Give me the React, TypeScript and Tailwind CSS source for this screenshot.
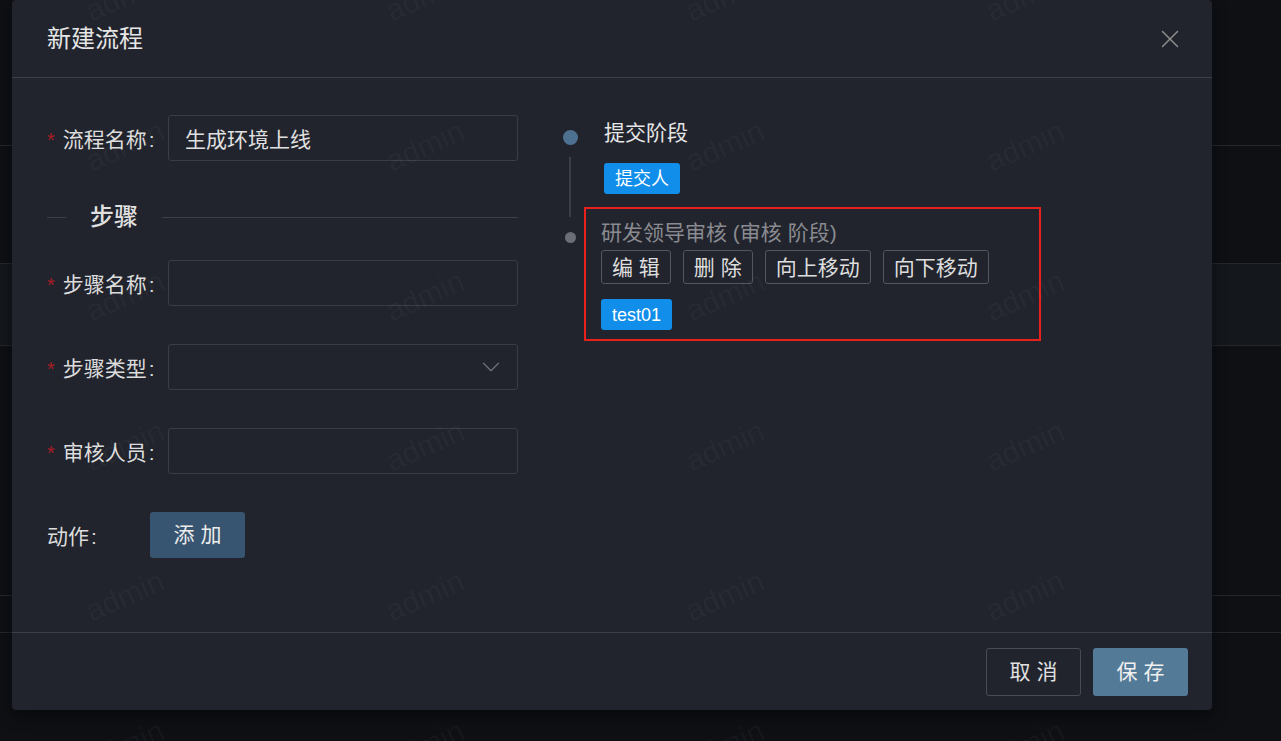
import { X, ChevronDown } from "lucide-react"

const FONT = "font-[family-name:'Liberation_Sans','Noto_Sans_CJK_SC',sans-serif]"

function Label({ text, required = true, width = "w-[121px]" }: { text: string; required?: boolean; width?: string }) {
  return (
    <div className={`flex shrink-0 items-center pt-[3px] text-[21px] leading-[30px] text-[#dcdcdc] ${width}`}>
      {required && <span className="mr-[8px] text-[20px] text-[#a61d24]">*</span>}
      <span>{text}</span>
      <span className="ml-[2px]">:</span>
    </div>
  )
}

function Field({ label, value, select }: { label: string; value?: string; select?: boolean }) {
  return (
    <div className="flex h-[46px] items-center">
      <Label text={label} />
      <div className="flex h-full flex-1 items-center justify-between rounded-[3px] border border-[#3a3d46] pr-[11px] pl-[16px] text-[21px] text-[#e0e0e0]">
        <span className="pt-[3px]">{value}</span>
        {select && <ChevronDown className="size-[30px] text-[#6b6e75]" strokeWidth={1.1} />}
      </div>
    </div>
  )
}

function SmallButton({ children }: { children: React.ReactNode }) {
  return (
    <button className="flex h-[34px] items-center rounded-[3px] border border-[#53565e] px-[10px] text-[21px] leading-none text-[#dedede]">
      {children}
    </button>
  )
}

function Tag({ children }: { children: React.ReactNode }) {
  return (
    <span className="inline-flex h-[31px] items-center rounded-[3px] bg-[#118ee9] px-[11px] text-[18px] leading-none text-white">
      {children}
    </span>
  )
}

function Watermark() {
  const cells = Array.from({ length: 5 * 6 })
  return (
    <div className="pointer-events-none absolute top-[-80px] left-[-25px] grid auto-rows-[150px] grid-cols-[repeat(5,300px)]">
      {cells.map((_, i) => (
        <div key={i} className="flex items-center justify-center">
          <span className="-rotate-[24deg] text-[30px] text-[rgba(255,255,255,0.04)]">admin</span>
        </div>
      ))}
    </div>
  )
}

export default function App() {
  return (
    <div className={`relative h-[741px] w-[1281px] overflow-hidden bg-[#0e1014] ${FONT}`}>
      {/* page behind the mask */}
      <div className="flex h-full flex-col">
        <div className="h-[146px] border-b border-[#24272d]" />
        <div className="h-[118px] border-b border-[#24272d]" />
        <div className="h-[82px] border-b border-[#24272d] bg-[#14171c]" />
        <div className="h-[250px] border-b border-[#24272d]" />
        <div className="h-[37px] border-b border-[#24272d]" />
        <div className="flex-1" />
      </div>

      {/* modal */}
      <div className="absolute top-0 left-[12px] flex w-[1200px] flex-col rounded-[4px] bg-[#21242d] shadow-[0_6px_16px_rgba(0,0,0,0.45)]">
        <div className="flex h-[78px] items-center justify-between border-b border-[#3c3f48] pr-[27px] pl-[35px]">
          <span className="text-[24px] text-[#e6e6e6]">新建流程</span>
          <X className="size-[30px] text-[#8c8c8c]" strokeWidth={1.2} />
        </div>

        <div className="flex h-[554px] pl-[35px]">
          {/* left form */}
          <div className="flex w-[471px] flex-col pt-[37px]">
            <Field label="流程名称" value="生成环境上线" />

            <div className="mt-[39px] mb-[26px] flex h-[34px] items-center">
              <div className="h-px w-[19px] bg-[#3c3f48]" />
              <span className="px-[24px] text-[24px] leading-[34px] font-medium text-[#e0e0e0]">步骤</span>
              <div className="h-px flex-1 bg-[#3c3f48]" />
            </div>

            <div className="flex flex-col gap-[38px]">
              <Field label="步骤名称" />
              <Field label="步骤类型" select />
              <Field label="审核人员" />
              <div className="flex h-[46px] items-center">
                <Label text="动作" required={false} width="w-[103px]" />
                <button className="flex h-[46px] w-[95px] items-center justify-center rounded-[3px] bg-[#375470] text-[21px] text-[#ececec]">
                  添 加
                </button>
              </div>
            </div>
          </div>

          {/* timeline */}
          <div className="ml-[42px] flex flex-col pt-[40px]">
            <div className="flex">
              <div className="flex w-[20px] flex-col items-center">
                <div className="mt-[12px] size-[15px] rounded-full bg-[#4e7192]" />
                <div className="mt-[12px] -mb-[10px] w-[2px] flex-1 bg-[#3b3e46]" />
              </div>
              <div className="ml-[24px] flex flex-col items-start pb-[13px]">
                <span className="text-[21px] leading-[30px] text-[#e6e6e6]">提交阶段</span>
                <div className="mt-[15px]">
                  <Tag>提交人</Tag>
                </div>
              </div>
            </div>

            <div className="flex">
              <div className="flex w-[20px] justify-center">
                <div className="mt-[25px] size-[11px] rounded-full bg-[#6b6e76]" />
              </div>
              <div className="ml-[4px] flex w-[457px] flex-col items-start border-2 border-[#e8211b] pt-[9px] pb-[9px] pl-[15px]">
                <span className="text-[21px] leading-[30px] text-[#8a8b90]">研发领导审核 (审核 阶段)</span>
                <div className="mt-[2px] flex gap-[12px]">
                  <SmallButton>编 辑</SmallButton>
                  <SmallButton>删 除</SmallButton>
                  <SmallButton>向上移动</SmallButton>
                  <SmallButton>向下移动</SmallButton>
                </div>
                <div className="mt-[15px]">
                  <Tag>test01</Tag>
                </div>
              </div>
            </div>
          </div>
        </div>

        <div className="flex h-[78px] items-center justify-end gap-[12px] border-t border-[#3c3f48] pr-[24px]">
          <button className="flex h-[48px] w-[95px] items-center justify-center rounded-[3px] border border-[#4a4b50] text-[21px] text-[#e0e0e0]">
            取 消
          </button>
          <button className="flex h-[48px] w-[95px] items-center justify-center rounded-[3px] bg-[#537a96] text-[21px] text-[#f0f0f0]">
            保 存
          </button>
        </div>
      </div>

      <Watermark />
    </div>
  )
}
